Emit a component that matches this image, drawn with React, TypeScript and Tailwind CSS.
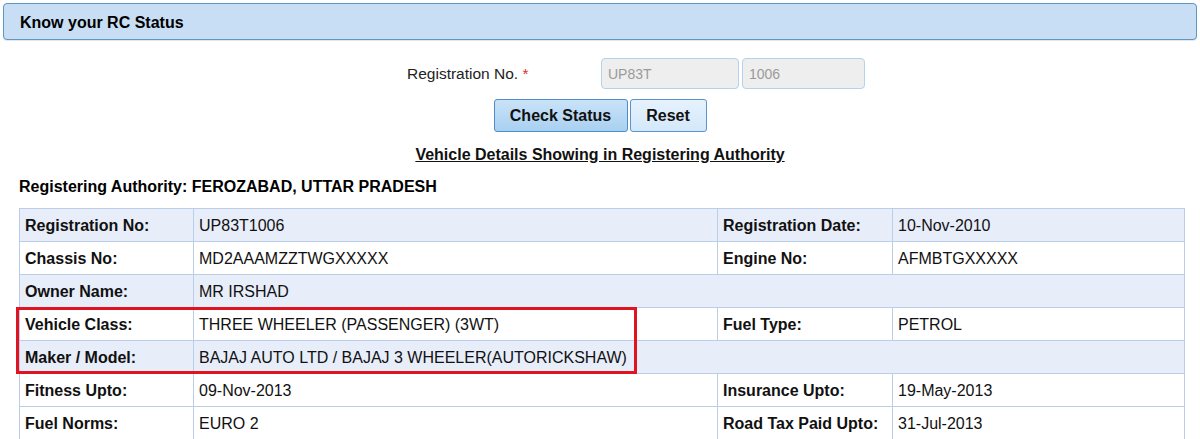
const rows = [
  { a: "Registration No:", b: "UP83T1006", c: "Registration Date:", d: "10-Nov-2010", alt: true },
  { a: "Chassis No:", b: "MD2AAAMZZTWGXXXXX", c: "Engine No:", d: "AFMBTGXXXXX", alt: false },
  { a: "Owner Name:", b: "MR IRSHAD", alt: true },
  { a: "Vehicle Class:", b: "THREE WHEELER (PASSENGER) (3WT)", c: "Fuel Type:", d: "PETROL", alt: false },
  { a: "Maker / Model:", b: "BAJAJ AUTO LTD / BAJAJ 3 WHEELER(AUTORICKSHAW)", alt: true },
  { a: "Fitness Upto:", b: "09-Nov-2013", c: "Insurance Upto:", d: "19-May-2013", alt: false },
  { a: "Fuel Norms:", b: "EURO 2", c: "Road Tax Paid Upto:", d: "31-Jul-2013", alt: false },
];

const cell = "border border-[#bccde9] px-[5px] h-[33px] align-middle pt-[2px]";

export default function App() {
  return (
    <div className="w-[1200px] h-[439px] overflow-hidden bg-white text-[#1a1a1a] font-['Liberation_Sans',Arial,sans-serif]">
      <div className="mx-[3px] mt-[3px] h-[37px] rounded-[4px] border border-[#5d97c4] bg-[#c8def4] flex items-center pl-[16px] pt-[2px] shadow-[0_1px_1px_rgba(0,0,0,0.1)]">
        <h1 className="text-[16px] font-bold text-black">Know your RC Status</h1>
      </div>

      <div className="flex items-center mt-[18px] h-[31px]">
        <label className="ml-[407px] w-[194px] text-[15.5px] text-[#222]">
          Registration No. <span className="text-[#d9352a]">*</span>
        </label>
        <input
          disabled
          value="UP83T"
          readOnly
          className="w-[138px] h-[31px] rounded-[4px] border border-[#b5d2ec] bg-[#eeeeee] px-[6px] text-[14px] text-[#9a9a9a]"
        />
        <input
          disabled
          value="1006"
          readOnly
          className="ml-[3px] w-[123px] h-[31px] rounded-[4px] border border-[#b5d2ec] bg-[#eeeeee] px-[6px] text-[14px] text-[#9a9a9a]"
        />
      </div>

      <div className="flex justify-center gap-[2px] mt-[10px]">
        <button className="w-[134px] h-[33px] rounded-[3px] border border-[#4f8cc8] bg-gradient-to-b from-[#c9e3f8] to-[#a9d0f1] text-[16px] font-bold text-[#111]">
          Check Status
        </button>
        <button className="w-[77px] h-[33px] rounded-[3px] border border-[#5a94cc] bg-gradient-to-b from-[#e6f2fd] to-[#d4e8fa] text-[16px] font-bold text-[#111]">
          Reset
        </button>
      </div>

      <div className="text-center mt-[13px] text-[16px] font-bold underline text-[#111] leading-[19px]">
        Vehicle Details Showing in Registering Authority
      </div>

      <div className="ml-[19px] mt-[13px] text-[16px] font-bold text-black leading-[19px]">
        Registering Authority: FEROZABAD, UTTAR PRADESH
      </div>

      <div className="relative ml-[19px] mt-[12px] w-[1166px]">
        <table className="w-full border-collapse text-[16px] text-[#111]">
          <colgroup>
            <col className="w-[174px]" />
            <col className="w-[524px]" />
            <col className="w-[175px]" />
            <col />
          </colgroup>
          <tbody>
            {rows.map((r) => (
              <tr key={r.a} className={r.alt ? "bg-[#e8edfa]" : "bg-white"}>
                <td className={cell + " font-bold"}>{r.a}</td>
                {r.c ? (
                  <>
                    <td className={cell}>{r.b}</td>
                    <td className={cell + " font-bold"}>{r.c}</td>
                    <td className={cell}>{r.d}</td>
                  </>
                ) : (
                  <td className={cell} colSpan={3}>
                    {r.b}
                  </td>
                )}
              </tr>
            ))}
          </tbody>
        </table>
        <div className="absolute left-[-3px] top-[99px] w-[621px] h-[67px] border-[3px] border-[#e0141e] pointer-events-none" />
      </div>
    </div>
  );
}
